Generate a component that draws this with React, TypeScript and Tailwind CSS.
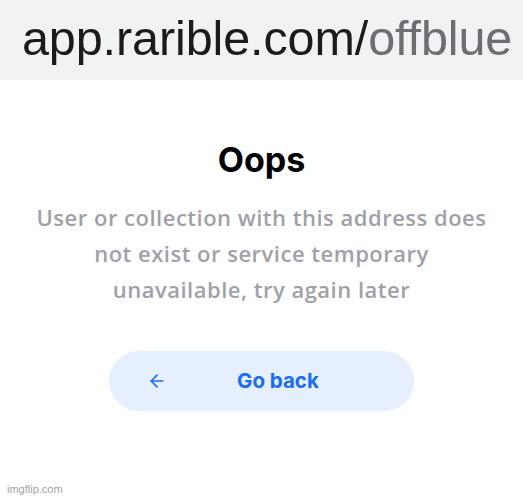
import React from "react";

const App: React.FC = () => {
  return (
    <div className="relative w-[523px] h-[500px] bg-white overflow-hidden">
      {/* Address bar */}
      <div className="h-[80px] bg-[#f1f2f4] flex items-center pl-[22px]">
        <span className="font-['Liberation_Sans',Arial,sans-serif] text-[48.5px] leading-none tracking-[-0.1px] text-[#1b1b1d] pb-[3px]">
          app.rarible.com/<span className="text-[#6d6e72]">offblue</span>
        </span>
      </div>

      {/* Error message */}
      <div className="flex flex-col items-center font-['Open_Sans',sans-serif] pt-[58px]">
        <h1 className="font-['Inter',sans-serif] text-[34px] leading-[44px] font-bold text-black">Oops</h1>
        <p className="mt-[17px] text-center text-[22px] leading-[36px] tracking-[0.5px] font-semibold text-[#9fa1a8]">
          User or collection with this address does
          <br />
          not exist or service temporary
          <br />
          unavailable, try again later
        </p>

        <button
          type="button"
          className="mt-[44px] w-[305px] h-[60px] rounded-full bg-[#e5effd] flex items-center pl-[38px] text-[#1a6cf0]"
        >
          <svg width="20" height="20" viewBox="0 0 24 24" fill="none" stroke="currentColor" strokeWidth="2" strokeLinecap="round" strokeLinejoin="round">
            <path d="M19 12H5" />
            <path d="M12 19l-7-7 7-7" />
          </svg>
          <span className="ml-[70px] font-['Inter',sans-serif] text-[20.5px] font-bold">Go back</span>
        </button>
      </div>

      {/* Watermark */}
      <span className="absolute left-[7px] bottom-[3px] font-['Liberation_Sans',Arial,sans-serif] text-[11px] text-[#a3a3a3]">
        imgflip.com
      </span>
    </div>
  );
};

export default App;
